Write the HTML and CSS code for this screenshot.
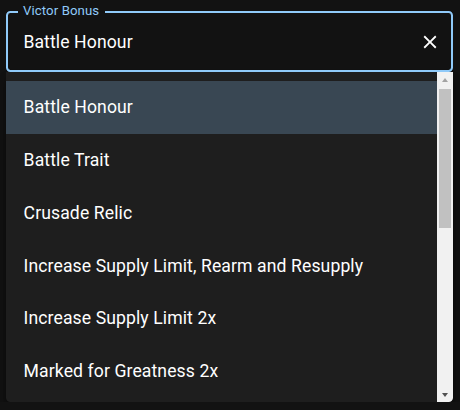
FILE: index.html
```html
<!DOCTYPE html>
<html lang="en">
<head>
<meta charset="utf-8">
<title>Victor Bonus</title>
<link rel="stylesheet" href="styles.css">
</head>
<body>
<div class="page">
  <div class="field">
    <span class="label">Victor Bonus</span>
    <span class="value">Battle Honour</span>
    <span class="clear" aria-label="Clear">
      <svg viewBox="0 0 24 24" width="22" height="22"><path fill="currentColor" d="M19 6.41 17.59 5 12 10.59 6.41 5 5 6.41 10.59 12 5 17.59 6.41 19 12 13.41 17.59 19 19 17.59 13.41 12z"/></svg>
    </span>
  </div>
  <div class="popup">
    <ul class="list">
      <li class="opt selected">Battle Honour</li>
      <li class="opt">Battle Trait</li>
      <li class="opt">Crusade Relic</li>
      <li class="opt">Increase Supply Limit, Rearm and Resupply</li>
      <li class="opt">Increase Supply Limit 2x</li>
      <li class="opt">Marked for Greatness 2x</li>
    </ul>
    <div class="scrollbar">
      <div class="sb-btn"><span class="arrow up"></span></div>
      <div class="sb-track"><div class="sb-thumb"></div></div>
      <div class="sb-btn"><span class="arrow down"></span></div>
    </div>
  </div>
</div>
</body>
</html>
```
FILE: styles.css
```css
html, body {
  margin: 0;
  padding: 0;
  background: #121212;
}
body {
  font-family: Roboto, "Liberation Sans", Arial, sans-serif;
  color: #fff;
}
.page {
  padding: 11px 7px 0 6px;
  width: 447px;
}
.field {
  position: relative;
  box-sizing: border-box;
  height: 61px;
  border: 2px solid #90caf9;
  border-radius: 4.4px;
  display: flex;
  align-items: center;
  padding: 0 9.7px 0 15.4px;
}
.label {
  position: absolute;
  left: 10px;
  top: -10.5px;
  padding: 0 6px 0 5px;
  background: #121212;
  color: #90caf9;
  font-size: 13.2px;
  line-height: 16px;
  letter-spacing: 0.1px;
}
.value {
  flex: 1;
  font-size: 17.6px;
  line-height: 24px;
  letter-spacing: 0.1px;
}
.clear {
  display: flex;
  color: #fff;
}
.popup {
  display: flex;
  height: 330px;
  background: #1e1e1e;
  border-radius: 0 0 4.4px 4.4px;
  overflow: hidden;
  box-shadow: 0 5px 6px rgba(0,0,0,0.3), 0 8px 12px rgba(0,0,0,0.2);
}
.list {
  flex: 1;
  list-style: none;
  margin: 0;
  padding: 8.8px 0 0 0;
  overflow: hidden;
}
.opt {
  height: 52.8px;
  display: flex;
  align-items: center;
  padding: 0 17.6px;
  font-size: 17.6px;
  letter-spacing: 0.1px;
  white-space: nowrap;
}
.opt.selected {
  background: #394753;
}
.scrollbar {
  width: 16px;
  background: #f1f1f1;
  display: flex;
  flex-direction: column;
}
.sb-btn {
  height: 16px;
  display: flex;
  align-items: center;
  justify-content: center;
}
.sb-track {
  flex: 1;
  padding: 1px 2px 0 2px;
}
.sb-thumb {
  height: 139px;
  background: #c1c1c1;
}
.arrow {
  width: 0;
  height: 0;
  border-left: 3.5px solid transparent;
  border-right: 3.5px solid transparent;
}
.arrow.up {
  border-bottom: 4px solid #a3a3a3;
  margin-top: -1px;
}
.arrow.down {
  border-top: 4px solid #505050;
  margin-top: 1px;
}
```
